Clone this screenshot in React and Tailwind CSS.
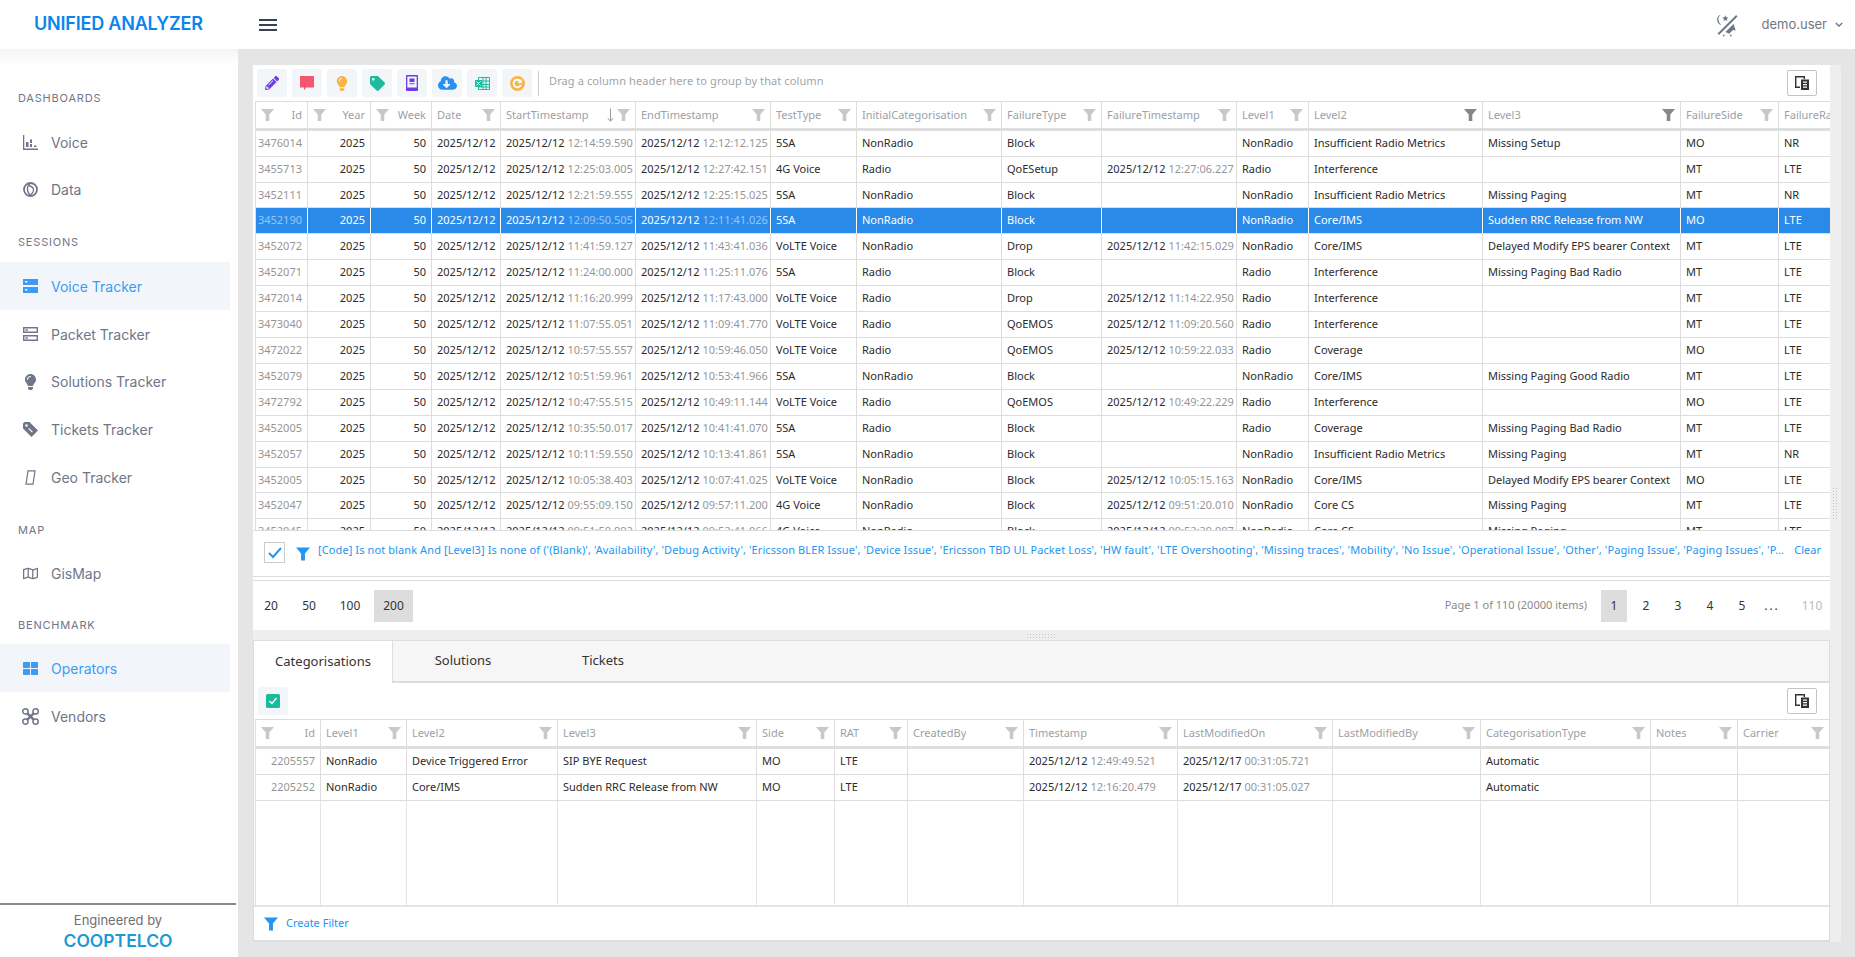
import React from "react";
import { FaPencilAlt, FaLightbulb, FaTag, FaCloudDownloadAlt, FaRegMap, FaThLarge } from "react-icons/fa";

const mainCols = [
  { key: "id", label: "Id", w: "w-[52px]", right: true },
  { key: "year", label: "Year", w: "w-[63px]", right: true },
  { key: "week", label: "Week", w: "w-[61px]", right: true },
  { key: "date", label: "Date", w: "w-[69px]" },
  { key: "start", label: "StartTimestamp", w: "w-[135px]", sort: true },
  { key: "end", label: "EndTimestamp", w: "w-[135px]" },
  { key: "test", label: "TestType", w: "w-[86px]" },
  { key: "init", label: "InitialCategorisation", w: "w-[145px]" },
  { key: "ftype", label: "FailureType", w: "w-[100px]" },
  { key: "fts", label: "FailureTimestamp", w: "w-[135px]" },
  { key: "l1", label: "Level1", w: "w-[72px]" },
  { key: "l2", label: "Level2", w: "w-[174px]", active: true },
  { key: "l3", label: "Level3", w: "w-[198px]", active: true },
  { key: "side", label: "FailureSide", w: "w-[98px]" },
  { key: "rat", label: "FailureRat", w: "w-[80px]" },
];

const subCols = [
  { key: "id", label: "Id", w: "w-[65px]", right: true },
  { key: "l1", label: "Level1", w: "w-[86px]" },
  { key: "l2", label: "Level2", w: "w-[151px]" },
  { key: "l3", label: "Level3", w: "w-[199px]" },
  { key: "side", label: "Side", w: "w-[78px]" },
  { key: "rat", label: "RAT", w: "w-[73px]" },
  { key: "by", label: "CreatedBy", w: "w-[116px]" },
  { key: "ts", label: "Timestamp", w: "w-[154px]" },
  { key: "mod", label: "LastModifiedOn", w: "w-[155px]" },
  { key: "modBy", label: "LastModifiedBy", w: "w-[148px]" },
  { key: "type", label: "CategorisationType", w: "w-[170px]" },
  { key: "notes", label: "Notes", w: "w-[87px]" },
  { key: "carrier", label: "Carrier", w: "w-[92px]" },
];

const d = "2025/12/12";
const row = (id, start, end, test, init, ftype, fts, l1, l2, l3, side, rat, h = "h-[26px]") => ({
  id, year: "2025", week: "50", date: d, start: [d, start], end: [d, end], test, init, ftype,
  fts: fts ? [d, fts] : "", l1, l2, l3, side, rat, h,
});

const rows = [
  row("3476014", "12:14:59.590", "12:12:12.125", "5SA", "NonRadio", "Block", "", "NonRadio", "Insufficient Radio Metrics", "Missing Setup", "MO", "NR"),
  row("3455713", "12:25:03.005", "12:27:42.151", "4G Voice", "Radio", "QoESetup", "12:27:06.227", "Radio", "Interference", "", "MT", "LTE"),
  row("3452111", "12:21:59.555", "12:25:15.025", "5SA", "NonRadio", "Block", "", "NonRadio", "Insufficient Radio Metrics", "Missing Paging", "MT", "NR", "h-[25px]"),
  row("3452190", "12:09:50.505", "12:11:41.026", "5SA", "NonRadio", "Block", "", "NonRadio", "Core/IMS", "Sudden RRC Release from NW", "MO", "LTE"),
  row("3452072", "11:41:59.127", "11:43:41.036", "VoLTE Voice", "NonRadio", "Drop", "11:42:15.029", "NonRadio", "Core/IMS", "Delayed Modify EPS bearer Context", "MT", "LTE"),
  row("3452071", "11:24:00.000", "11:25:11.076", "5SA", "Radio", "Block", "", "Radio", "Interference", "Missing Paging Bad Radio", "MT", "LTE"),
  row("3472014", "11:16:20.999", "11:17:43.000", "VoLTE Voice", "Radio", "Drop", "11:14:22.950", "Radio", "Interference", "", "MT", "LTE"),
  row("3473040", "11:07:55.051", "11:09:41.770", "VoLTE Voice", "Radio", "QoEMOS", "11:09:20.560", "Radio", "Interference", "", "MT", "LTE"),
  row("3472022", "10:57:55.557", "10:59:46.050", "VoLTE Voice", "Radio", "QoEMOS", "10:59:22.033", "Radio", "Coverage", "", "MO", "LTE"),
  row("3452079", "10:51:59.961", "10:53:41.966", "5SA", "NonRadio", "Block", "", "NonRadio", "Core/IMS", "Missing Paging Good Radio", "MT", "LTE"),
  row("3472792", "10:47:55.515", "10:49:11.144", "VoLTE Voice", "Radio", "QoEMOS", "10:49:22.229", "Radio", "Interference", "", "MO", "LTE"),
  row("3452005", "10:35:50.017", "10:41:41.070", "5SA", "Radio", "Block", "", "Radio", "Coverage", "Missing Paging Bad Radio", "MT", "LTE"),
  row("3452057", "10:11:59.550", "10:13:41.861", "5SA", "NonRadio", "Block", "", "NonRadio", "Insufficient Radio Metrics", "Missing Paging", "MT", "NR"),
  row("3452005", "10:05:38.403", "10:07:41.025", "VoLTE Voice", "NonRadio", "Block", "10:05:15.163", "NonRadio", "Core/IMS", "Delayed Modify EPS bearer Context", "MO", "LTE", "h-[25px]"),
  row("3452047", "09:55:09.150", "09:57:11.200", "4G Voice", "NonRadio", "Block", "09:51:20.010", "NonRadio", "Core CS", "Missing Paging", "MT", "LTE"),
  row("3452045", "09:51:59.992", "09:52:41.066", "4G Voice", "NonRadio", "Block", "09:52:39.987", "NonRadio", "Core CS", "Missing Paging", "MT", "LTE"),
];

const subRows = [
  { id: "2205557", l1: "NonRadio", l2: "Device Triggered Error", l3: "SIP BYE Request", side: "MO", rat: "LTE", ts: [d, "12:49:49.521"], mod: ["2025/12/17", "00:31:05.721"], type: "Automatic", h: "h-[26px]" },
  { id: "2205252", l1: "NonRadio", l2: "Core/IMS", l3: "Sudden RRC Release from NW", side: "MO", rat: "LTE", ts: [d, "12:16:20.479"], mod: ["2025/12/17", "00:31:05.027"], type: "Automatic", h: "h-[26px]" },
];

const filterText =
  "[Code] Is not blank And [Level3] Is none of ('(Blank)', 'Availability', 'Debug Activity', 'Ericsson BLER Issue', 'Device Issue', 'Ericsson TBD UL Packet Loss', 'HW fault', 'LTE Overshooting', 'Missing traces', 'Mobility', 'No Issue', 'Operational Issue', 'Other', 'Paging Issue', 'Paging Issues', 'P...";

function Funnel({ className }) {
  return (
    <svg viewBox="0 0 13 12" className={className} fill="currentColor">
      <path d="M0 0h13L8.3 5.6V12H4.7V5.6z" />
    </svg>
  );
}

function ColumnChooser() {
  return (
    <button className="w-[30px] h-[26px] bg-white border border-[#c4c4c4] rounded-[2px] flex items-center justify-center">
      <svg viewBox="0 0 14 14" className="w-[14px] h-[14px] text-[#333]" fill="currentColor">
        <path d="M0 0h10v3H8.6V1.4H1.4v9.2H5V12H0z" />
        <path d="M6 3.5h8V14H6zM8 5.5v1.2h4V5.5zM8 8v1.2h4V8zm0 2.5v1.2h4v-1.2z" fillRule="evenodd" />
      </svg>
    </button>
  );
}

function HeaderCell({ col }) {
  const funnel = (
    <Funnel className={`w-[13px] h-[12px] shrink-0 ${col.active ? "text-[#84888c]" : "text-[#c6c9cb]"}`} />
  );
  return (
    <div className={`${col.w} shrink-0 h-full border-r border-[#ddd] px-[5px] flex items-center justify-between gap-[2px]`}>
      {col.right && funnel}
      <span className="text-[#9ba1a7] truncate">{col.label}</span>
      {!col.right && (
        <span className="flex items-center gap-[3px]">
          {col.sort && (
            <svg viewBox="0 0 8 16" className="w-[7px] h-[15px] text-[#888]" fill="none" stroke="currentColor" strokeWidth="1">
              <path d="M4 0v14M1 11l3 3.5L7 11" />
            </svg>
          )}
          {funnel}
        </span>
      )}
    </div>
  );
}

function BodyCell({ col, value, selected }) {
  const isStamp = Array.isArray(value);
  return (
    <div className={`${col.w} shrink-0 h-full border-r ${selected ? "border-white" : "border-[#ddd]"} px-[5px] flex items-center overflow-hidden whitespace-nowrap ${col.right ? "justify-end" : ""}`}>
      {isStamp ? (
        <span>
          {value[0]} <span className="opacity-50">{value[1]}</span>
        </span>
      ) : (
        <span className={col.key === "id" ? "opacity-50" : ""}>{value}</span>
      )}
    </div>
  );
}

function DataGrid({ cols, data, bodyHeight, selectedIndex, inset }) {
  return (
    <div className={`${inset} overflow-hidden text-[11px] font-['Noto_Sans',sans-serif]`}>
      <div className="flex h-[30px] border-t border-b-[3px] border-[#ddd] border-b-[#dedede] border-l border-l-[#ddd]">
        {cols.map((c) => (
          <HeaderCell key={c.key} col={c} />
        ))}
      </div>
      <div className={`${bodyHeight} overflow-hidden flex flex-col border-l border-[#ddd]`}>
        {data.map((r, i) => (
          <div
            key={i}
            className={`flex shrink-0 ${r.h} border-b border-[#ddd] ${i === selectedIndex ? "bg-[#2a8aea] text-white" : "text-[#2b2b2b]"}`}
          >
            {cols.map((c) => (
              <BodyCell key={c.key} col={c} value={r[c.key]} selected={i === selectedIndex} />
            ))}
          </div>
        ))}
        <div className="flex flex-1">
          {data.length < 5 &&
            cols.map((c) => <div key={c.key} className={`${c.w} shrink-0 border-r border-[#e4e4e4]`} />)}
        </div>
      </div>
    </div>
  );
}

function ToolButton({ children }) {
  return (
    <button className="w-[30px] h-[28px] bg-[#f2f6f9] rounded-[3px] flex items-center justify-center shrink-0">
      {children}
    </button>
  );
}

function Toolbar() {
  return (
    <div className="h-[36px] flex items-center pl-[4px] gap-[5px] text-[11px] font-['Noto_Sans',sans-serif]">
      <ToolButton>
        <FaPencilAlt className="w-[14px] h-[14px] text-[#6d3be8]" />
      </ToolButton>
      <ToolButton>
        <svg viewBox="0 0 14 15" className="w-[14px] h-[15px] text-[#f4556f]" fill="currentColor">
          <path d="M0 0h14v11.5H6l-2 3v-3H0z" />
        </svg>
      </ToolButton>
      <ToolButton>
        <FaLightbulb className="w-[14px] h-[15px] text-[#f6b545]" />
      </ToolButton>
      <ToolButton>
        <FaTag className="w-[15px] h-[15px] text-[#1abc9c]" />
      </ToolButton>
      <ToolButton>
        <svg viewBox="0 0 12 16" className="w-[12px] h-[16px] text-[#6d3be8]" fill="currentColor">
          <path fillRule="evenodd" d="M1 0h10a1 1 0 0 1 1 1v14a1 1 0 0 1-1 1H1a1 1 0 0 1-1-1V1a1 1 0 0 1 1-1zm.3 1.5v11h9.4v-11zM3.5 3.5h5V7h-5zM3.5 8.2h5v1h-5z" />
        </svg>
      </ToolButton>
      <ToolButton>
        <FaCloudDownloadAlt className="w-[19px] h-[16px] text-[#2b8ff0]" />
      </ToolButton>
      <ToolButton>
        <svg viewBox="0 0 15 15" className="w-[15px] h-[15px] text-[#1abc9c]" fill="none" stroke="currentColor" strokeWidth="1">
          <path d="M3.5 1.5h11v12h-11zM8 1.5v12M11 1.5v12M3.5 5h11M3.5 8.5h11M3.5 11h11" />
          <rect x="0" y="4" width="7" height="7" fill="currentColor" stroke="none" />
          <path d="M1.5 5.5l4 4M5.5 5.5l-4 4" stroke="#fff" />
        </svg>
      </ToolButton>
      <ToolButton>
        <svg viewBox="0 0 16 16" className="w-[15px] h-[15px]">
          <circle cx="8" cy="8" r="8" fill="#f6b545" />
          <path d="M11.5 9.5A4 4 0 1 1 10.5 5" fill="none" stroke="#fff" strokeWidth="2" />
          <path d="M12.5 3v4.5H8z" fill="#fff" />
        </svg>
      </ToolButton>
      <div className="w-[1px] h-[25px] bg-[#ccc] ml-[1px]" />
      <span className="text-[#a0a5aa] ml-[5px] -mt-[3px] tracking-[0.1px]">Drag a column header here to group by that column</span>
      <div className="ml-auto mr-[13px]">
        <ColumnChooser />
      </div>
    </div>
  );
}

function FilterPanel() {
  return (
    <div className="h-[47px] border-t border-b border-[#ddd] flex items-start pl-[11px] text-[11px] font-['Noto_Sans',sans-serif] text-[#2196f3]">
      <div className="mt-[11px] w-[21px] h-[21px] border border-[#ccc] flex items-center justify-center shrink-0">
        <svg viewBox="0 0 14 12" className="w-[14px] h-[12px]" fill="none" stroke="#2196f3" strokeWidth="2">
          <path d="M1 6l4 4 8-9" />
        </svg>
      </div>
      <Funnel className="w-[14px] h-[14px] mt-[16px] ml-[11px] shrink-0" />
      <span className="mt-[11px] ml-[8px] flex-1 truncate tracking-[0.1px]">{filterText}</span>
      <span className="mt-[11px] mr-[9px] shrink-0">Clear</span>
    </div>
  );
}

function Pager() {
  return (
    <div className="h-[50px] mt-[3px] border-t border-[#ddd] flex items-center text-[12px] text-[#333] font-['Noto_Sans',sans-serif]">
      <span className="w-[36px] text-center">20</span>
      <span className="w-[40px] text-center">50</span>
      <span className="w-[42px] text-center">100</span>
      <span className="h-[32px] w-[39px] ml-[3px] bg-[#ddd] flex items-center justify-center">200</span>
      <span className="ml-auto text-[11px] text-[#8a8a8a]">Page 1 of 110 (20000 items)</span>
      <span className="h-[32px] w-[26px] ml-[14px] mr-[3px] bg-[#ddd] flex items-center justify-center">1</span>
      {["2", "3", "4", "5"].map((n) => (
        <span key={n} className="h-[32px] w-[32px] flex items-center justify-center">
          {n}
        </span>
      ))}
      <span className="w-[28px] text-center tracking-[2px]">...</span>
      <span className="w-[34px] ml-[9px] mr-[1px] text-center text-[#bbb]">110</span>
    </div>
  );
}

function Splitter() {
  return (
    <div className="h-[10px] flex items-center justify-center">
      <div className="w-[31px] h-[5px] bg-[radial-gradient(#c4c4c4_1px,transparent_1px)] bg-size-[3px_3px]" />
    </div>
  );
}

function DetailPanel() {
  return (
    <div className="bg-white border border-[#ddd] border-b-2 h-[302px] flex flex-col overflow-hidden">
      <div className="h-[42px] flex bg-[#f6f6f6] text-[13px] text-[#333] font-['Noto_Sans',sans-serif] shrink-0">
        <div className="w-[139px] bg-white border-r border-[#ddd] flex items-center justify-center">Categorisations</div>
        <div className="flex-1 flex border-b-2 border-[#ddd]">
          <div className="w-[140px] flex items-center justify-center">Solutions</div>
          <div className="w-[140px] flex items-center justify-center">Tickets</div>
        </div>
      </div>
      <div className="h-[36px] flex items-center pl-[4px] pr-[12px] justify-between shrink-0">
        <ToolButton>
          <svg viewBox="0 0 14 14" className="w-[14px] h-[14px]">
            <rect width="14" height="14" rx="1.5" fill="#1abc9c" />
            <path d="M3.5 7L6 9.5 10.5 4" fill="none" stroke="#fff" strokeWidth="1.3" />
          </svg>
        </ToolButton>
        <ColumnChooser />
      </div>
      <DataGrid cols={subCols} data={subRows} bodyHeight="h-[156px]" selectedIndex={-1} inset="pl-[1px]" />
      <div className="flex-1 border-t-2 border-[#e4e4e4] flex items-center pl-[10px] gap-[8px] text-[11px] text-[#2196f3] font-['Noto_Sans',sans-serif]">
        <Funnel className="w-[14px] h-[14px]" />
        Create Filter
      </div>
    </div>
  );
}

const navSections = [
  {
    label: "DASHBOARDS",
    h: "h-[53px]",
    pb: "pb-[12px]",
    items: [
      { name: "Voice", icon: "voice" },
      { name: "Data", icon: "data", h: "h-[47px]" },
    ],
  },
  {
    label: "SESSIONS",
    h: "h-[49px]",
    pb: "pb-[12px]",
    items: [
      { name: "Voice Tracker", icon: "server", active: true },
      { name: "Packet Tracker", icon: "serverOutline" },
      { name: "Solutions Tracker", icon: "bulb", h: "h-[47px]" },
      { name: "Tickets Tracker", icon: "tag" },
      { name: "Geo Tracker", icon: "geo" },
    ],
  },
  {
    label: "MAP",
    h: "h-[49px]",
    pb: "pb-[12px]",
    items: [{ name: "GisMap", icon: "map", h: "h-[47px]" }],
  },
  {
    label: "BENCHMARK",
    h: "h-[47px]",
    pb: "pb-[11px]",
    items: [
      { name: "Operators", icon: "grid", active: true },
      { name: "Vendors", icon: "drone" },
    ],
  },
];

function NavIcon({ name }) {
  const cls = "w-[15px] h-[15px] shrink-0";
  if (name === "voice")
    return (
      <svg viewBox="0 0 15 15" className={cls} fill="currentColor">
        <path d="M0 0h1.3v13.500H15V15H0zM3 7h2.500v5H3zM7 9h2v3H7zM7 4.500h2V8H7zM11 10.500h2.500V12H11z" />
      </svg>
    );
  if (name === "data")
    return (
      <svg viewBox="0 0 15 15" className={cls} fill="none" stroke="currentColor" strokeWidth="1.8">
        <circle cx="7.5" cy="7.5" r="6.5" />
        <path d="M7 1.5C3 5 4 11 8 13.5M5 3.5c3 .5 5 1.500 5.500 4s-1 3.500-2.500 5" strokeWidth="1.3" />
      </svg>
    );
  if (name === "server")
    return (
      <svg viewBox="0 0 15 14" className="w-[15px] h-[14px] shrink-0" fill="currentColor">
        <path fillRule="evenodd" d="M0 0h15v6H0zM0 8h15v6H0zM2 2v1.6h2.500V2zM2 10v1.6h2.500V10z" />
      </svg>
    );
  if (name === "serverOutline")
    return (
      <svg viewBox="0 0 15 14" className="w-[15px] h-[14px] shrink-0" fill="currentColor">
        <path fillRule="evenodd" d="M0 0h15v6H0zM1.4 1.4v3.200h12.200V1.4zM0 8h15v6H0zM1.4 9.4v3.200h12.200V9.4z" />
        <path d="M2.5 2.3h2.400v1.400H2.500zM2.5 10.300h2.400v1.400H2.500z" />
      </svg>
    );
  if (name === "bulb") return <FaLightbulb className="w-[15px] h-[16px] shrink-0" />;
  if (name === "tag")
    return (
      <svg viewBox="0 0 15 15" className={cls} fill="currentColor">
        <path fillRule="evenodd" d="M0 1.5 1.5 0h5L15 8.5 8.5 15 0 6.5zM3.5 2.2a1.300 1.300 0 1 0 0 2.600 1.300 1.300 0 0 0 0-2.600zM6 6l-.8.8L9 10.600l.8-.8z" />
      </svg>
    );
  if (name === "geo")
    return (
      <svg viewBox="0 0 15 15" className={cls} fill="none" stroke="currentColor" strokeWidth="1.2">
        <path d="M5 .8h7l-2 13.400H3z" />
      </svg>
    );
  if (name === "map") return <FaRegMap className={cls} />;
  if (name === "grid") return <FaThLarge className={cls} />;
  return (
    <svg viewBox="0 0 16 16" className="w-[17px] h-[17px] shrink-0 -ml-[1px] -mr-[1px]" fill="none" stroke="currentColor" strokeWidth="1.4">
      <circle cx="3.2" cy="3.2" r="2.5" />
      <circle cx="12.8" cy="3.2" r="2.5" />
      <circle cx="3.2" cy="12.8" r="2.5" />
      <circle cx="12.8" cy="12.8" r="2.5" />
      <path d="M5 5l6 6M11 5l-6 6" strokeWidth="2.2" />
    </svg>
  );
}

function Sidebar() {
  return (
    <aside className="w-[238px] shrink-0 bg-white flex flex-col font-['Inter',sans-serif]">
      <div className="h-[16px] bg-linear-to-b from-[#f4f4f4] to-white shrink-0" />
      {navSections.map((s) => (
        <div key={s.label}>
          <div className={`${s.h} ${s.pb} flex items-end pl-[18px] text-[11px] leading-[16px] tracking-[0.8px] text-[#6f7689]`}>
            {s.label}
          </div>
          {s.items.map((it) => (
            <div
              key={it.name}
              className={`${it.h || "h-[48px]"} w-[230px] flex items-center pl-[23px] gap-[13px] text-[14px] ${
                it.active ? "bg-[#f2f6fa] text-[#3b9cf7]" : "text-[#6f7689]"
              }`}
            >
              <NavIcon name={it.icon} />
              {it.name}
            </div>
          ))}
        </div>
      ))}
      <div className="flex-1" />
      <div className="h-[54px] w-[236px] border-t-2 border-[#8a8a8a] flex flex-col items-center justify-center">
        <span className="text-[13px] text-[#707070] leading-[20px]">Engineered by</span>
        <span className="text-[17.5px] font-semibold text-[#1b9ad6] leading-[22px]">COOPTELCO</span>
      </div>
    </aside>
  );
}

function Header() {
  return (
    <header className="h-[49px] shrink-0 bg-white flex items-center pl-[34px] pr-[12px] font-['Inter',sans-serif]">
      <span className="w-[225px] -mt-[2px] text-[18px] font-semibold text-[#0a84ef] tracking-[-0.2px]">UNIFIED ANALYZER</span>
      <button className="w-[18px] flex flex-col gap-[3px]">
        <span className="h-[2px] bg-[#374151]" />
        <span className="h-[2px] bg-[#374151]" />
        <span className="h-[2px] bg-[#374151]" />
      </button>
      <div className="ml-auto flex items-center text-[#6f7689]">
        <svg viewBox="0 0 22 22" className="w-[24px] h-[24px] mr-[23px]" fill="currentColor">
          <path d="M5 1.5A6 6 0 0 0 6 11a5 5 0 0 1-1-9.500z" />
          <path d="M9.5 2l.8 1.900 2 .2-1.500 1.300.5 2-1.800-1-1.800 1 .5-2L6.700 4.100l2-.2z" />
          <path d="M20 2.5 3 19.5" fill="none" stroke="currentColor" strokeWidth="1.8" />
          <path d="M17 10l2 6-2.500-.5L13 19l-3.500-1.500L17 10z" />
          <path d="M7 20l1 2 1-2zM13.5 20l1 2 1-2z" />
        </svg>
        <span className="text-[13px]">demo.user</span>
        <svg viewBox="0 0 8 6" className="w-[8px] h-[6px] ml-[8px]" fill="none" stroke="currentColor" strokeWidth="1.4">
          <path d="M.8 1L4 4l3.200-3" />
        </svg>
      </div>
    </header>
  );
}

export default function App() {
  return (
    <div className="w-[1855px] h-[957px] overflow-hidden flex flex-col bg-[#e5e5e5]">
      <Header />
      <div className="flex flex-1 min-h-0">
        <Sidebar />
        <main className="flex-1 min-w-0 pl-[15px] pr-[14px] pt-[16px]">
          <div className="bg-[#eeeeee] pr-[11px] relative">
            <div className="bg-white overflow-hidden">
              <Toolbar />
              <DataGrid cols={mainCols} data={rows} bodyHeight="h-[399px]" selectedIndex={3} inset="pl-[2px]" />
              <FilterPanel />
              <Pager />
            </div>
            <Splitter />
            <DetailPanel />
            <div className="absolute right-[2px] top-[422px] w-[7px] h-[33px] bg-[radial-gradient(#c4c4c4_1px,transparent_1px)] bg-size-[3px_3px]" />
          </div>
        </main>
      </div>
    </div>
  );
}
